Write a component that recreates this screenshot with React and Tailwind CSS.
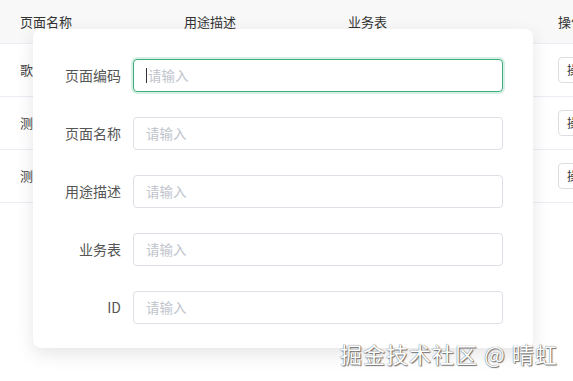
import React from "react";

const columns = ["页面名称", "用途描述", "业务表"];
const rows = ["歌曲管理", "测试页面", "测试页面二"];
const fields = ["页面编码", "页面名称", "用途描述", "业务表", "ID"];

const font = { fontFamily: '"Noto Sans CJK SC", "Noto Sans", sans-serif' };

export default function App() {
  return (
    <div
      className="relative w-[573px] h-[381px] overflow-hidden bg-white text-[#333]"
      style={font}
    >
      {/* table behind the popover */}
      <div className="w-[620px]">
        <div className="flex h-[44px] items-center bg-[#f8f8f9] text-[13px] border-b border-[#ebeef5]">
          {columns.map((c) => (
            <div key={c} className="w-[164px] pl-5 shrink-0">
              {c}
            </div>
          ))}
          <div className="pl-[66px] shrink-0">操作</div>
        </div>
        {rows.map((r) => (
          <div
            key={r}
            className="flex h-[53px] items-center text-[13px] text-[#444] border-b border-[#ebeef5]"
          >
            <div className="w-[164px] pl-5 shrink-0">{r}</div>
            <div className="w-[164px] shrink-0"></div>
            <div className="w-[164px] shrink-0"></div>
            <div className="pl-[66px] shrink-0">
              <button className="h-[26px] px-2 border border-[#dcdee2] rounded text-[12px] text-[#333] bg-white">
                操作
              </button>
            </div>
          </div>
        ))}
      </div>

      {/* popover form */}
      <div className="absolute left-[33px] top-[29px] w-[500px] rounded-lg bg-white pt-[30px] pb-[24px] shadow-[0_6px_18px_rgba(0,0,0,0.1)]">
        <div className="flex flex-col gap-[25px]">
          {fields.map((f, i) => (
            <div key={f} className="flex items-center">
              <label className="w-[100px] pr-3 text-right text-[14px] text-[#555]">
                {f}
              </label>
              <div
                className={
                  "w-[370px] h-[33px] rounded flex items-center px-3 text-[13.5px] bg-white " +
                  (i === 0
                    ? "border border-[#3eaf7c] shadow-[0_0_0_2px_rgba(62,175,124,0.2)]"
                    : "border border-[#dcdfe6]")
                }
              >
                {i === 0 && <span className="w-px h-[15px] bg-[#333] mr-[1px]"></span>}
                <span className="text-[#c0c4cc]">请输入</span>
              </div>
            </div>
          ))}
        </div>
      </div>

      {/* watermark */}
      <div
        className="absolute left-[340px] top-[337px] text-[22px] tracking-[1px] text-white whitespace-nowrap"
        style={{ textShadow: "0 0 1px #444, 1px 1px 1px #777" }}
      >
        掘金技术社区 @ 晴虹
      </div>
    </div>
  );
}
